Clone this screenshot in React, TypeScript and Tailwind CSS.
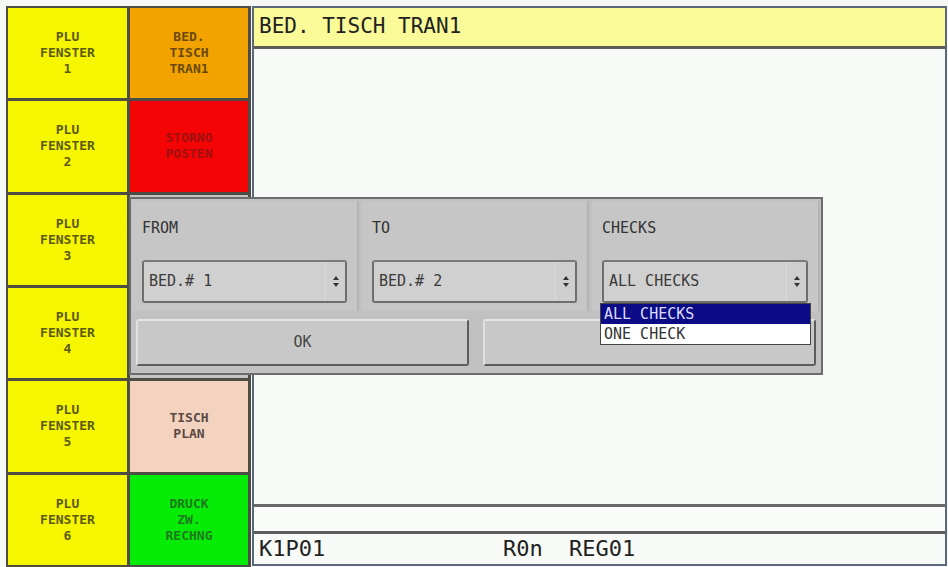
const MONO = "font-['DejaVu_Sans_Mono','Liberation_Mono',monospace]"

interface Tile {
  lines: string[]
  bg: string
  fg: string
}

const TILES: Tile[] = [
  { lines: ['PLU', 'FENSTER', '1'], bg: 'bg-[#f6f600]', fg: 'text-[#5c5a10]' },
  { lines: ['BED.', 'TISCH', 'TRAN1'], bg: 'bg-[#f2a300]', fg: 'text-[#6a4a10]' },
  { lines: ['PLU', 'FENSTER', '2'], bg: 'bg-[#f6f600]', fg: 'text-[#5c5a10]' },
  { lines: ['STORNO', 'POSTEN'], bg: 'bg-[#f40404]', fg: 'text-[#a01010]' },
  { lines: ['PLU', 'FENSTER', '3'], bg: 'bg-[#f6f600]', fg: 'text-[#5c5a10]' },
  { lines: [''], bg: 'bg-[#c4c4c4]', fg: 'text-[#333]' },
  { lines: ['PLU', 'FENSTER', '4'], bg: 'bg-[#f6f600]', fg: 'text-[#5c5a10]' },
  { lines: [''], bg: 'bg-[#c4c4c4]', fg: 'text-[#333]' },
  { lines: ['PLU', 'FENSTER', '5'], bg: 'bg-[#f6f600]', fg: 'text-[#5c5a10]' },
  { lines: ['TISCH', 'PLAN'], bg: 'bg-[#f4d2c0]', fg: 'text-[#5a4a44]' },
  { lines: ['PLU', 'FENSTER', '6'], bg: 'bg-[#f6f600]', fg: 'text-[#5c5a10]' },
  { lines: ['DRUCK', 'ZW.', 'RECHNG'], bg: 'bg-[#06ec06]', fg: 'text-[#1e7a1e]' },
]

function SelectArrows() {
  return (
    <div className="flex h-full w-[20px] items-center justify-center border-l border-[#dadada] bg-[#cfcfcf]">
      <svg width="6" height="11" viewBox="0 0 6 11">
        <path d="M0 4 L3 0 L6 4 Z" fill="#333" />
        <path d="M0 7 L3 11 L6 7 Z" fill="#333" />
      </svg>
    </div>
  )
}

function Field({ label, value, w }: { label: string; value: string; w: string }) {
  return (
    <div className={`flex flex-col ${w} h-full border-r-2 border-[#b4b4b4] bg-[#c6c6c6] px-[10px]`}>
      <div className="h-[32px] pt-[18px] text-[15px] leading-[18px] text-[#333]">{label}</div>
      <div className="mt-[27px] flex h-[43px] items-center justify-between rounded-[3px] border-2 border-[#6e6e6e] border-t-[#7a7a7a] bg-[#d0d0d0] pl-[5px]">
        <span className="text-[15px] text-[#3a3a3a]">{value}</span>
        <SelectArrows />
      </div>
    </div>
  )
}

function Dialog() {
  return (
    <div className={`absolute left-[129px] top-[197px] flex h-[178px] w-[694px] flex-col border-2 border-[#6c6c6c] bg-[#c1c1c1] ${MONO}`}>
      <div className="flex h-[112px] gap-[3px] px-[1px] pt-[2px]">
        <Field label="FROM" value="BED.# 1" w="w-[228px]" />
        <Field label="TO" value="BED.# 2" w="w-[228px]" />
        <Field label="CHECKS" value="ALL CHECKS" w="w-[229px]" />
      </div>
      <div className="flex gap-[14px] px-[5px] pt-[8px]">
        <div className="flex h-[47px] w-[334px] items-center justify-center rounded-[3px] border-2 border-[#5c5c5c] border-t-[#e6e6e6] border-l-[#e0e0e0] bg-[#c8c8c8] text-[15px] text-[#444]">
          OK
        </div>
        <div className="h-[47px] w-[334px] rounded-[3px] border-2 border-[#5c5c5c] border-t-[#e6e6e6] border-l-[#e0e0e0] bg-[#c8c8c8]" />
      </div>
      <div className="absolute left-[469px] top-[104px] w-[211px] border border-[#444] bg-white text-[15px] leading-[20px]">
        <div className="bg-[#0b0b86] pl-[3px] text-[#dcdcff]">ALL CHECKS</div>
        <div className="pl-[3px] text-[#333]">ONE CHECK</div>
      </div>
    </div>
  )
}

export default function App() {
  return (
    <div className={`relative flex h-[567px] w-[948px] overflow-hidden bg-[#f5f8f4] pl-[6px] pt-[6px] ${MONO}`}>
      <div className="grid h-[561px] w-[245px] grid-cols-[119px_118px] grid-rows-6 gap-[3px] border-2 border-[#4d4d46] bg-[#4d4d46]">
        {TILES.map((t, i) => (
          <div
            key={i}
            className={`flex flex-col items-center justify-center ${t.bg} ${t.fg} text-[13px] font-bold leading-[16px]`}
          >
            {t.lines.map((l, j) => (
              <span key={j}>{l}</span>
            ))}
          </div>
        ))}
      </div>
      <div className="ml-[1px] flex h-[560px] w-[695px] flex-col border-2 border-[#5a6878]">
        <div className="flex h-[41px] items-center border-b-[3px] border-[#5c5c5c] bg-[#fafa98] pl-[5px] text-[21px] text-[#222]">
          BED. TISCH TRAN1
        </div>
        <div className="flex-1 bg-[#f7faf7]" />
        <div className="h-[27px] border-t-[3px] border-[#6a6a6a] bg-[#fafcfa]" />
        <div className="flex h-[33px] items-center border-t-[3px] border-[#5c5c5c] bg-[#f7faf7] pl-[5px] text-[22px] leading-[26px] text-[#222]">
          <span className="w-[244px]">K1P01</span>
          <span className="w-[66px]">R0n</span>
          <span>REG01</span>
        </div>
      </div>
      <Dialog />
    </div>
  )
}
